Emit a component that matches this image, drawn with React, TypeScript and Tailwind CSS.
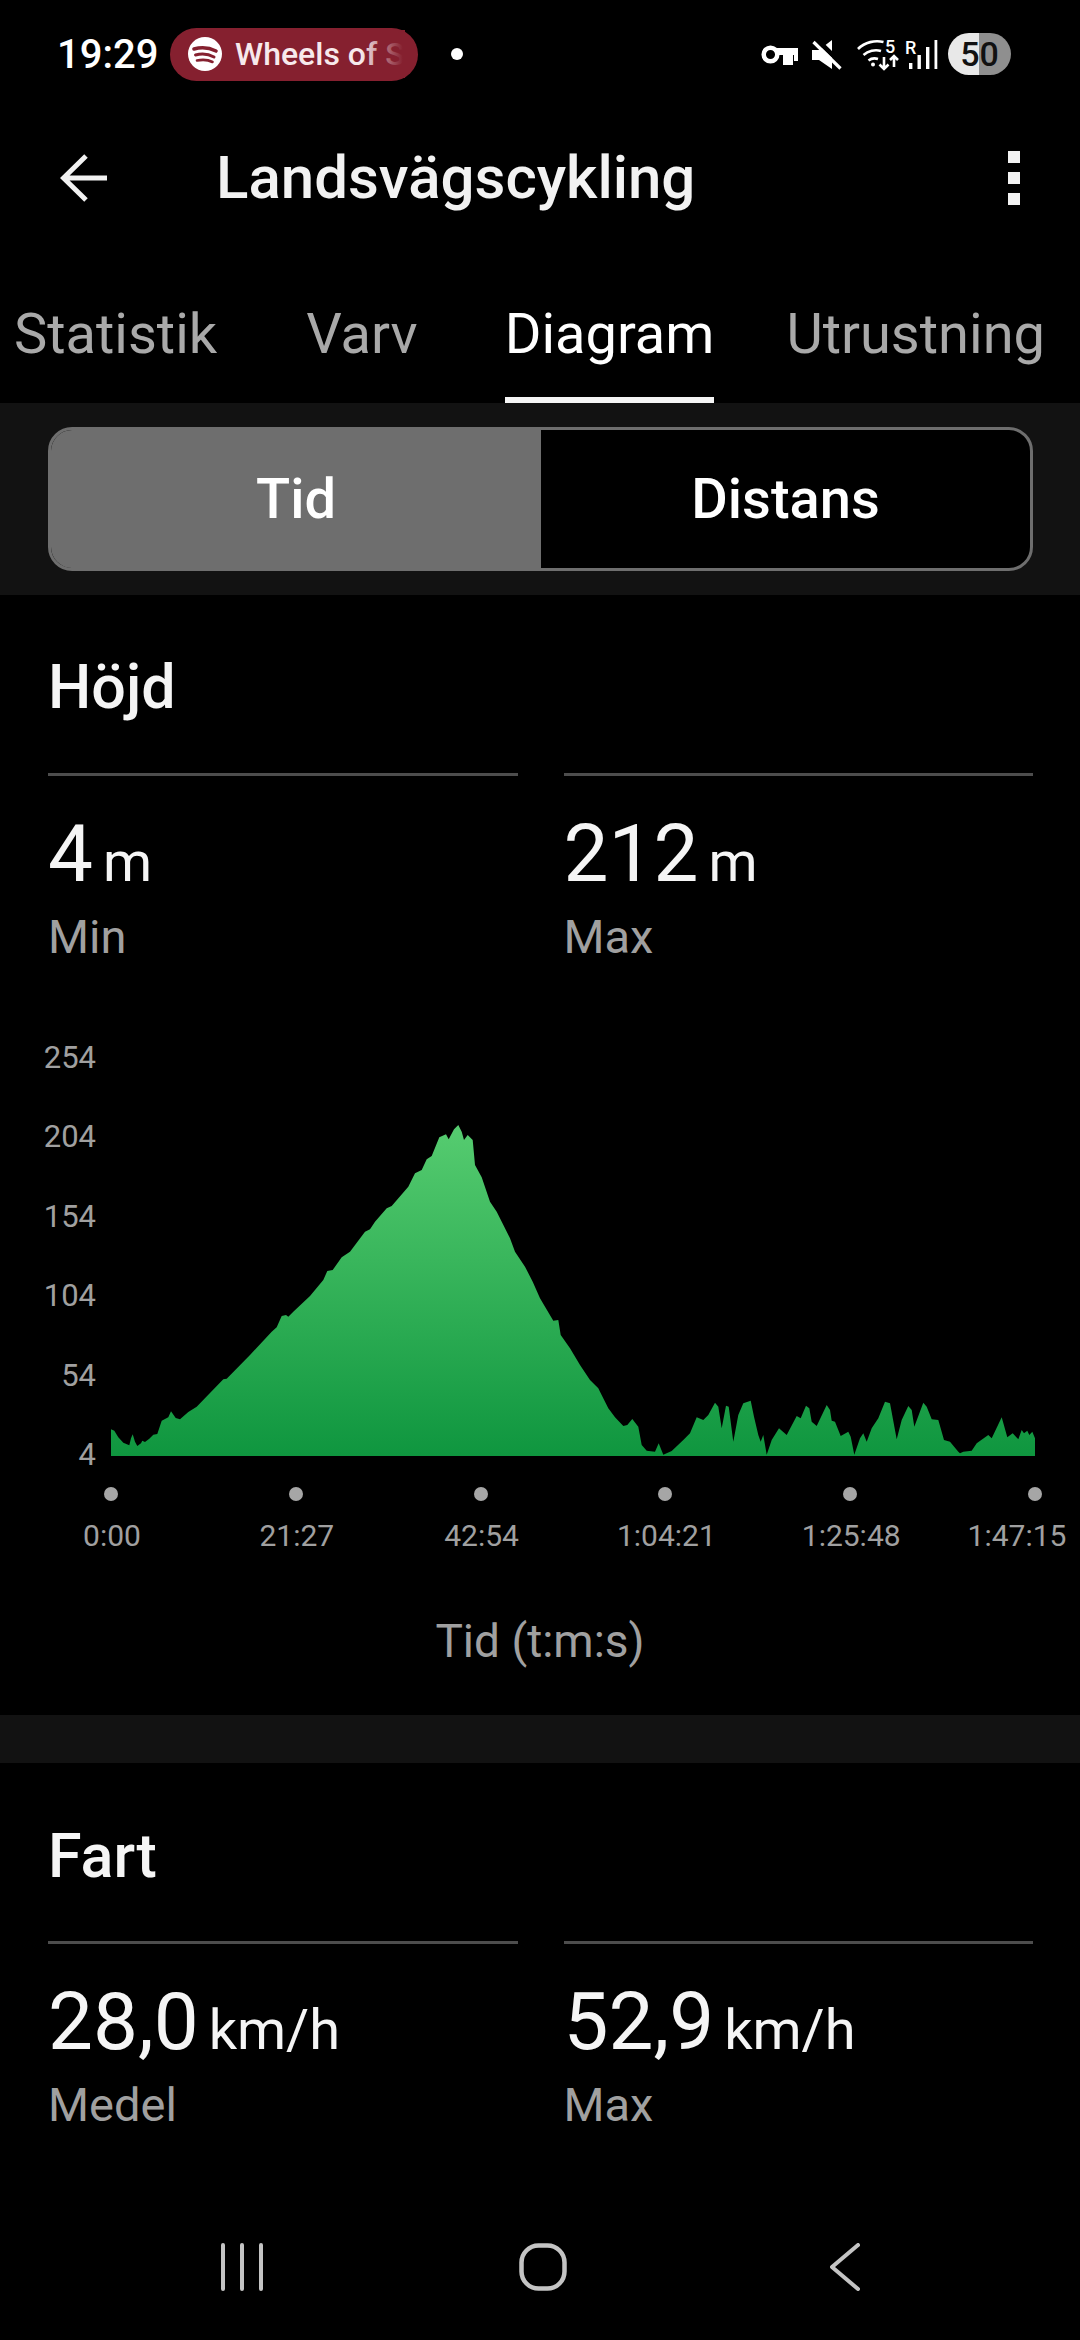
import React from 'react';

// traced from the elevation curve, split in two runs (left climb, right rolling part)
const climb = [
  [93, 1098], [93, 1018], [103, 1022], [115, 1042], [130, 1058], [148, 1066], [153, 1045], [158, 1033], [165, 1055], [172, 1068],
  [183, 1060], [187, 1052], [195, 1056], [208, 1046], [220, 1034], [232, 1032], [245, 992], [265, 982], [273, 964], [287, 984],
  [300, 988], [325, 966], [350, 950], [430, 868], [440, 866], [510, 795], [575, 725], [590, 712], [605, 678], [618, 675],
  [625, 680], [640, 665], [690, 618], [730, 570], [742, 543], [758, 540], [785, 502], [810, 485], [855, 425], [870, 418],
  [885, 395], [920, 355], [935, 348], [985, 290], [1005, 250], [1025, 240], [1040, 208], [1055, 198], [1078, 142], [1098, 133],
  [1106, 148], [1122, 118], [1135, 105], [1145, 125], [1152, 150], [1163, 135], [1178, 150], [1185, 225], [1205, 262], [1230, 335],
  [1250, 365], [1290, 445], [1305, 485], [1335, 530], [1358, 575], [1380, 625], [1420, 692], [1435, 690], [1442, 735], [1470, 775],
  [1500, 825], [1530, 870], [1555, 895], [1560, 905],
];
const rolling = [
  [25, 205], [45, 232], [70, 258], [82, 255], [97, 237], [115, 260], [125, 315], [140, 332], [165, 335], [176, 310],
  [190, 344], [215, 333], [250, 300], [270, 280], [290, 232], [310, 240], [325, 225], [345, 188], [355, 200], [365, 265],
  [378, 197], [386, 200], [400, 305], [415, 225], [430, 190], [452, 182], [462, 230], [475, 285], [482, 305], [490, 285],
  [500, 344], [515, 300], [537, 265], [560, 285], [590, 228], [602, 235], [618, 197], [628, 205], [635, 245], [650, 258],
  [680, 195], [690, 210], [695, 242], [705, 245], [722, 288], [745, 275], [752, 290], [763, 344], [780, 295], [790, 280],
  [800, 305], [815, 265], [835, 235], [855, 185], [870, 190], [890, 298], [905, 240], [925, 198], [935, 210], [943, 260],
  [970, 188], [980, 200], [995, 238], [1015, 240], [1032, 300], [1050, 305], [1075, 335], [1080, 340], [1090, 335], [1115, 332],
  [1130, 310], [1165, 285], [1175, 295], [1205, 232], [1222, 292], [1238, 280], [1255, 298], [1265, 270], [1272, 280], [1282, 272],
  [1288, 285], [1297, 275], [1305, 295], [1305, 348], [0, 348],
];

const areaPath = () => {
  const a = climb.map(([x, y]) => `${(80 + x / 3 - 111).toFixed(1)},${(1090 + y / 3 - 1050).toFixed(1)}`);
  const b = rolling.map(([x, y], i) =>
    i === rolling.length - 1
      ? `0,${(1456 - 1050).toFixed(1)}`
      : `${(600 + x / 3 - 111).toFixed(1)},${(1340 + y / 3 - 1050).toFixed(1)}`
  );
  return 'M' + [...a, ...b].join(' L') + ' Z';
};

const StatusIcons = () => (
  <div className="flex items-center">
    {/* key */}
    <svg width="38" height="20" viewBox="0 0 38 20" className="mt-[2px]">
      <circle cx="9.500" cy="9.500" r="6.800" fill="none" stroke="#fff" strokeWidth="4.500" />
      <path d="M15 3H37V16H33V10H32V20H22V10H15Z" fill="#fff" />
    </svg>
    {/* muted speaker */}
    <svg width="30" height="30" viewBox="0 0 30 30" className="ml-[13px] mt-[1px]">
      <path d="M0 10H7L20 0V29L7 20H0Z" fill="#fff" />
      <path d="M5 0L33 27" stroke="#000" strokeWidth="5" />
      <path d="M1.500 2L28.500 28.500" stroke="#fff" strokeWidth="3.200" />
    </svg>
    {/* wifi with 5 and arrows */}
    <svg width="44" height="32" viewBox="0 0 44 32" fill="none" stroke="#fff" strokeWidth="2.600" className="ml-[15px] mt-[1px] overflow-visible">
      <path d="M1 10C8 3 18 1 26.500 3" />
      <path d="M6.500 16C11 12 18 10 24 12" />
      <path d="M11.500 21.500C14 19.500 18 19 21 20" />
      <circle cx="16" cy="25.500" r="2" fill="#fff" stroke="none" />
      <path d="M27 18V30M22.500 25.500L27 30L31.500 25.500" />
      <path d="M37 28V17M33 21L37 17L41 21" />
      <text x="28" y="14" fill="#fff" stroke="none" fontSize="18" fontWeight="500" fontFamily="Roboto, sans-serif">5</text>
    </svg>
    {/* signal */}
    <svg width="33" height="30" viewBox="0 0 33 30" fill="#fff" className="ml-[4px] mt-[1px] overflow-visible">
      <text x="0" y="14" fontSize="18" fontWeight="500" fontFamily="Roboto, sans-serif">R</text>
      <rect x="4" y="23" width="3.400" height="6" />
      <rect x="12.500" y="15" width="3.400" height="14" />
      <rect x="21" y="7" width="3.400" height="22" />
      <rect x="29.500" y="0" width="2.800" height="29" />
    </svg>
    <div className="ml-[10px] w-[63px] h-[42px] rounded-full bg-[linear-gradient(90deg,#e8e8e8_50%,#8f8f8f_50%)] flex items-center justify-center text-[34px] font-medium text-[#111]">
      50
    </div>
  </div>
);

const Stat = ({ value, unit, label }: { value: string; unit: string; label: string }) => (
  <div className="flex-1 border-t-[3px] border-[#4d4d4d]">
    <div className="h-[94px] mt-[31px] flex items-baseline text-[#f5f5f5]">
      <span className="text-[80px] leading-[94px]">{value}</span>
      <span className="text-[56px] leading-[94px] ml-[10px]">{unit}</span>
    </div>
    <div className="text-[47px] leading-[52px] mt-[10px] text-[#a0a0a0]">{label}</div>
  </div>
);

const Tab = ({ label, active, className }: { label: string; active?: boolean; className: string }) => (
  <div className={`h-[98px] flex items-center ${className} ${active ? 'text-white border-b-[6px] border-[#f5f5f5] pb-[34px]' : 'text-[#a9a9a9] pb-[40px]'}`}>
    {label}
  </div>
);

const yTicks = ['254', '204', '154', '104', '54', '4'];
const xTicks = ['0:00', '21:27', '42:54', '1:04:21', '1:25:48', '1:47:15'];

export default function App() {
  return (
    <div className="w-[1080px] h-[2340px] bg-black overflow-hidden flex flex-col font-['Roboto',sans-serif] text-white">
      {/* status bar */}
      <div className="h-[108px] pl-[57px] pr-[69px] flex items-center shrink-0">
        <span className="text-[40px] font-medium w-[113px] pt-[2px]">19:29</span>
        <div className="w-[248px] h-[53px] rounded-full bg-[#85202f] flex items-center pl-[18px]">
          <svg width="34" height="34" viewBox="0 0 34 34">
            <circle cx="17" cy="17" r="17" fill="#fff" />
            <g fill="none" stroke="#85202f" strokeLinecap="round">
              <path d="M6 12c7-2 15-1.500 22 2" strokeWidth="3.600" />
              <path d="M7.500 18c6-1.500 13-1 18.500 2" strokeWidth="3" />
              <path d="M9 23.500c5-1 11-.8 15.500 1.500" strokeWidth="2.600" />
            </g>
          </svg>
          <div className="relative ml-[13px] whitespace-nowrap text-[32px] font-medium text-[#f7e9ec]">
            Wheels of S
            <div className="absolute inset-y-0 right-0 w-[44px] bg-gradient-to-r from-[#85202f00] to-[#85202f] to-95%" />
          </div>
        </div>
        <div className="ml-[33px] w-[12px] h-[12px] rounded-full bg-white" />
        <div className="ml-auto">
          <StatusIcons />
        </div>
      </div>

      {/* toolbar */}
      <div className="h-[140px] shrink-0 pl-[60px] pr-[60px] flex items-center">
        <svg width="48" height="48" viewBox="0 0 48 48" fill="none" stroke="#f2f2f2" strokeWidth="5">
          <path d="M47 24H3M26 2L3.500 24 26 46" />
        </svg>
        <span className="ml-[108px] text-[60px] font-medium text-[#f2f2f2] whitespace-nowrap">Landsvägscykling</span>
        <div className="ml-auto flex flex-col gap-[9px]">
          <div className="w-[12px] h-[12px] bg-[#f2f2f2]" />
          <div className="w-[12px] h-[12px] bg-[#f2f2f2]" />
          <div className="w-[12px] h-[12px] bg-[#f2f2f2]" />
        </div>
      </div>

      {/* tabs */}
      <div className="h-[155px] shrink-0 flex items-end text-[56px]">
        <Tab label="Statistik" className="ml-[14px]" />
        <Tab label="Varv" className="ml-[89px]" />
        <Tab label="Diagram" active className="ml-[87px]" />
        <Tab label="Utrustning" className="ml-[72px]" />
      </div>

      {/* time / distance toggle */}
      <div className="h-[192px] shrink-0 bg-[#121212] flex items-center pl-[48px] pr-[47px]">
        <div className="w-full h-[144px] rounded-[24px] border-[3px] border-[#6e6e6e] bg-black flex overflow-hidden text-[56px] font-medium">
          <div className="w-[490px] bg-[#6e6e6e] flex items-center justify-center">Tid</div>
          <div className="flex-1 flex items-center justify-center">Distans</div>
        </div>
      </div>

      {/* elevation */}
      <div className="h-[1120px] shrink-0 flex flex-col">
        <div className="h-[178px] pt-[7px] pl-[48px] flex items-center text-[61px] font-medium text-[#f5f5f5]">Höjd</div>
        <div className="flex gap-[46px] pl-[48px] pr-[47px]">
          <Stat value="4" unit="m" label="Min" />
          <Stat value="212" unit="m" label="Max" />
        </div>

        <div className="flex mt-[77px] h-[433px]">
          <div className="w-[96px] flex flex-col justify-between text-[31px] leading-[36px] text-[#a0a0a0] text-right">
            {yTicks.map(t => <span key={t}>{t}</span>)}
          </div>
          <svg width="930" height="420" viewBox="0 0 930 420" className="ml-[15px] mt-[10px]">
            <defs>
              <linearGradient id="elev" x1="0" y1="75" x2="0" y2="406" gradientUnits="userSpaceOnUse">
                <stop offset="0" stopColor="#56cc70" />
                <stop offset="1" stopColor="#0f963f" />
              </linearGradient>
            </defs>
            <path d={areaPath()} fill="url(#elev)" />
          </svg>
        </div>

        <div className="flex justify-between ml-[111px] mr-[45px] mt-[14px]">
          {xTicks.map(t => (
            <div key={t} className="w-0 flex justify-center">
              <div className="w-[14px] h-[14px] shrink-0 rounded-full bg-[#a6a6a6]" />
            </div>
          ))}
        </div>
        <div className="flex justify-between ml-[112px] mr-[44px] mt-[17px] text-[30px] leading-[36px] text-[#a0a0a0]">
          {xTicks.map((t, i) => (
            <div key={t} className={`w-0 flex justify-center whitespace-nowrap ${i === 5 ? '-translate-x-[19px]' : ''}`}>{t}</div>
          ))}
        </div>
        <div className="text-center text-[46px] leading-[56px] mt-[59px] text-[#a0a0a0]">Tid (t:m:s)</div>
      </div>

      <div className="h-[48px] shrink-0 bg-[#121212]" />

      {/* speed */}
      <div className="flex-1 flex flex-col overflow-hidden">
        <div className="h-[178px] pt-[9px] pl-[48px] shrink-0 flex items-center text-[61px] font-medium text-[#f5f5f5]">Fart</div>
        <div className="flex gap-[46px] pl-[48px] pr-[47px]">
          <Stat value="28,0" unit="km/h" label="Medel" />
          <Stat value="52,9" unit="km/h" label="Max" />
        </div>
      </div>

      {/* navigation bar */}
      <div className="h-[145px] shrink-0 bg-black flex items-start pt-[48px] pl-[221px] pr-[220px]">
        <svg width="42" height="48" viewBox="0 0 42 48" stroke="#c4c4c4" strokeWidth="4" strokeLinecap="round">
          <path d="M2 2v44M21 2v44M40 2v44" />
        </svg>
        <svg width="48" height="48" viewBox="0 0 48 48" fill="none" stroke="#c4c4c4" strokeWidth="4.500" className="ml-[256px]">
          <rect x="2.500" y="2.500" width="43" height="43" rx="17" />
        </svg>
        <svg width="30" height="48" viewBox="0 0 30 48" fill="none" stroke="#c4c4c4" strokeWidth="4" strokeLinecap="round" strokeLinejoin="round" className="ml-auto">
          <path d="M28 2L2 24l26 22" />
        </svg>
      </div>
    </div>
  );
}
